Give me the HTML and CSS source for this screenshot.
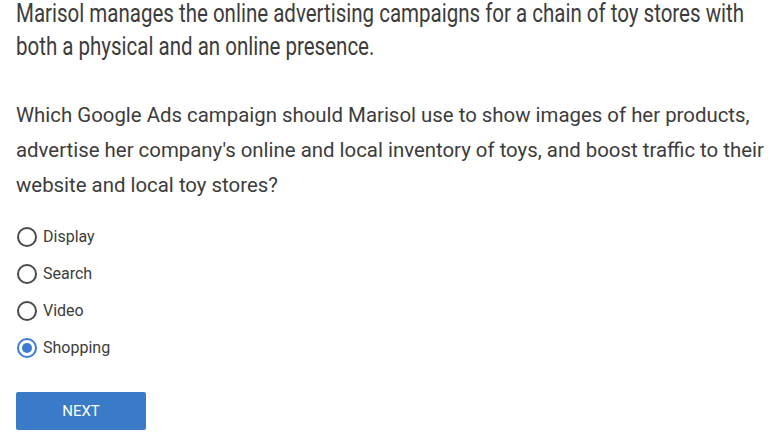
FILE: index.html
```html
<!DOCTYPE html>
<html lang="en">
<head>
    <meta charset="UTF-8">
    <title>Quiz Question</title>
    <link rel="stylesheet" href="styles.css">
</head>
<body>

<div class="question">
    <p class="intro">Marisol manages the online advertising campaigns for a chain of toy stores with both a physical and an online presence.</p>

    <p class="prompt">Which Google Ads campaign should Marisol use to show images of her products, advertise her company's online and local inventory of toys, and boost traffic to their website and local toy stores?</p>

    <form class="options">
        <label class="option"><input type="radio" name="answer" value="display"><span class="dot"></span>Display</label>
        <label class="option"><input type="radio" name="answer" value="search"><span class="dot"></span>Search</label>
        <label class="option"><input type="radio" name="answer" value="video"><span class="dot"></span>Video</label>
        <label class="option"><input type="radio" name="answer" value="shopping" checked><span class="dot"></span>Shopping</label>
    </form>

    <button type="button" class="next">NEXT</button>
</div>

</body>
</html>
```

FILE: styles.css
```css
body {
    margin: 0;
    padding: 0;
    background-color: #fff;
    font-family: Roboto, "Noto Sans", sans-serif;
    color: #3c3c3c;
}

.question {
    padding: 0 16px;
}

.intro {
    margin: -3px 0 0;
    font-size: 25px;
    line-height: 33px;
    transform: scaleX(0.82);
    transform-origin: left top;
    width: 900px;
}

.prompt {
    margin: 35px 0 0;
    font-size: 20.4px;
    line-height: 35px;
    width: 770px;
}

.options {
    display: flex;
    flex-direction: column;
    gap: 14px;
    margin-top: 22px;
}

.option {
    display: flex;
    align-items: center;
    gap: 6px;
    font-size: 16px;
    line-height: 23px;
    color: #3c3c3c;
    cursor: pointer;
}

.option input {
    display: none;
}

.dot {
    width: 16px;
    height: 16px;
    border: 2px solid #4a4a4a;
    border-radius: 50%;
    margin-left: 1px;
    box-sizing: content-box;
    position: relative;
}

.option input:checked + .dot {
    border-color: #3a7bd5;
}

.option input:checked + .dot::after {
    content: "";
    position: absolute;
    left: 3px;
    top: 3px;
    width: 10px;
    height: 10px;
    border-radius: 50%;
    background-color: #3a7bd5;
}

.next {
    margin-top: 33px;
    width: 130px;
    height: 38px;
    border: none;
    border-radius: 2px;
    background-color: #3a7bc8;
    color: #fff;
    font-family: Roboto, sans-serif;
    font-size: 15px;
    cursor: pointer;
}
```
